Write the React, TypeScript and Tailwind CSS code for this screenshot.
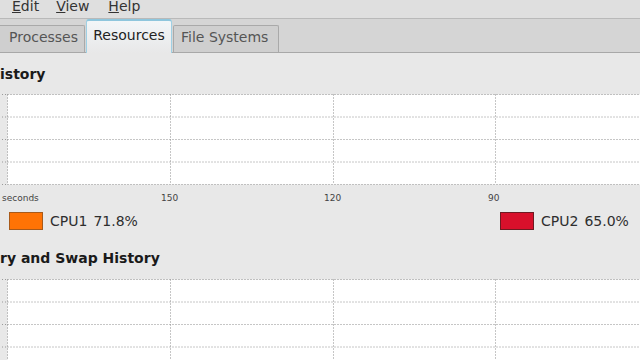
import React from "react";

const rows = [0.5, 23, 45.5, 68, 90.5];
const cols = [7.5, 170.5, 333.5, 495.5];

function Grid() {
    return (
        <svg width="640" height="92" className="block">
            <rect x="7.5" y="0.5" width="640" height="90" fill="#ffffff" />
            {rows.map((y) => (
                <g key={y}>
                    <line x1="7.5" y1={y} x2="640" y2={y} stroke="#8c8c8c" strokeDasharray="1 2" />
                    <line x1="2" y1={y} x2="7" y2={y} stroke="#9a9a9a" strokeDasharray="1 2" />
                </g>
            ))}
            {cols.map((x) => (
                <line key={x} x1={x} y1="0.5" x2={x} y2="90.5" stroke="#8c8c8c" strokeDasharray="1 2" />
            ))}
        </svg>
    );
}

function Legend({ fill, border, label, value }: { fill: string; border: string; label: string; value: string }) {
    return (
        <div className="flex items-center h-[18px]">
            <div className={`w-[34px] h-[18px] border ${fill} ${border}`} />
            <span className="ml-[7px] text-[14px] leading-[18px] text-[#2e2e2e]">
                {label}
                <span className="ml-[6px]">{value}</span>
            </span>
        </div>
    );
}

export default function App() {
    return (
        <div
            className="w-[640px] h-[360px] overflow-hidden bg-[#e8e8e8] text-[#2e3436]"
            style={{ fontFamily: '"DejaVu Sans", Verdana, sans-serif' }}
        >
            {/* menu bar */}
            <div className="h-[19px] bg-[#dfdfdf] border-b border-[#b9b9b9] overflow-hidden">
                <div className="flex text-[14px] leading-[16px] text-[#333] -mt-[2px]">
                    <span className="ml-[12px]"><u>E</u>dit</span>
                    <span className="ml-[17px]"><u>V</u>iew</span>
                    <span className="ml-[19px]"><u>H</u>elp</span>
                </div>
            </div>

            {/* tabs */}
            <div className="h-[34px] bg-[#d5d5d5] border-b border-[#a8a8a8] flex items-end">
                <div className="w-[85px] h-[27px] bg-[#cfcfcf] border border-l-0 border-b-0 border-[#a9a9a9] rounded-tr-[2px] flex items-center pl-[9px] pb-[4px] text-[14px] text-[#555]">
                    Processes
                </div>
                <div className="ml-[1px] w-[86px] h-[34px] -mb-px bg-gradient-to-b from-[#f2f6f8] to-[#e8e8e8] border border-b-0 border-[#9fd0e4] border-t-2 border-t-[#8ec6dd] rounded-t-[3px] flex items-center justify-center pb-[4px] text-[14px] text-[#222]">
                    Resources
                </div>
                <div className="ml-[1px] w-[106px] h-[27px] bg-[#cfcfcf] border border-b-0 border-[#a9a9a9] rounded-t-[2px] flex items-center pl-[7px] pb-[4px] text-[14px] text-[#555]">
                    File Systems
                </div>
            </div>

            {/* content */}
            <div className="flex flex-col">
                <div className="pt-[12px] text-[14px] leading-[18px] font-bold text-[#1a1a1a]">istory</div>
                <div className="mt-[11px]">
                    <Grid />
                </div>
                <div className="mt-[6px] flex text-[9px] leading-[12px] text-[#444]">
                    <span className="w-[161px] pl-[2px]">seconds</span>
                    <span className="w-[163px]">150</span>
                    <span className="w-[164px]">120</span>
                    <span>90</span>
                </div>
                <div className="mt-[8px] flex">
                    <div className="ml-[9px] w-[491px]">
                        <Legend fill="bg-[#ff7305]" border="border-[#a85a1a]" label="CPU1" value="71.8%" />
                    </div>
                    <Legend fill="bg-[#d8102b]" border="border-[#6e1a22]" label="CPU2" value="65.0%" />
                </div>
                <div className="mt-[19px] text-[14px] leading-[18px] font-bold text-[#1a1a1a]">ry and Swap History</div>
                <div className="mt-[12px]">
                    <Grid />
                </div>
            </div>
        </div>
    );
}
